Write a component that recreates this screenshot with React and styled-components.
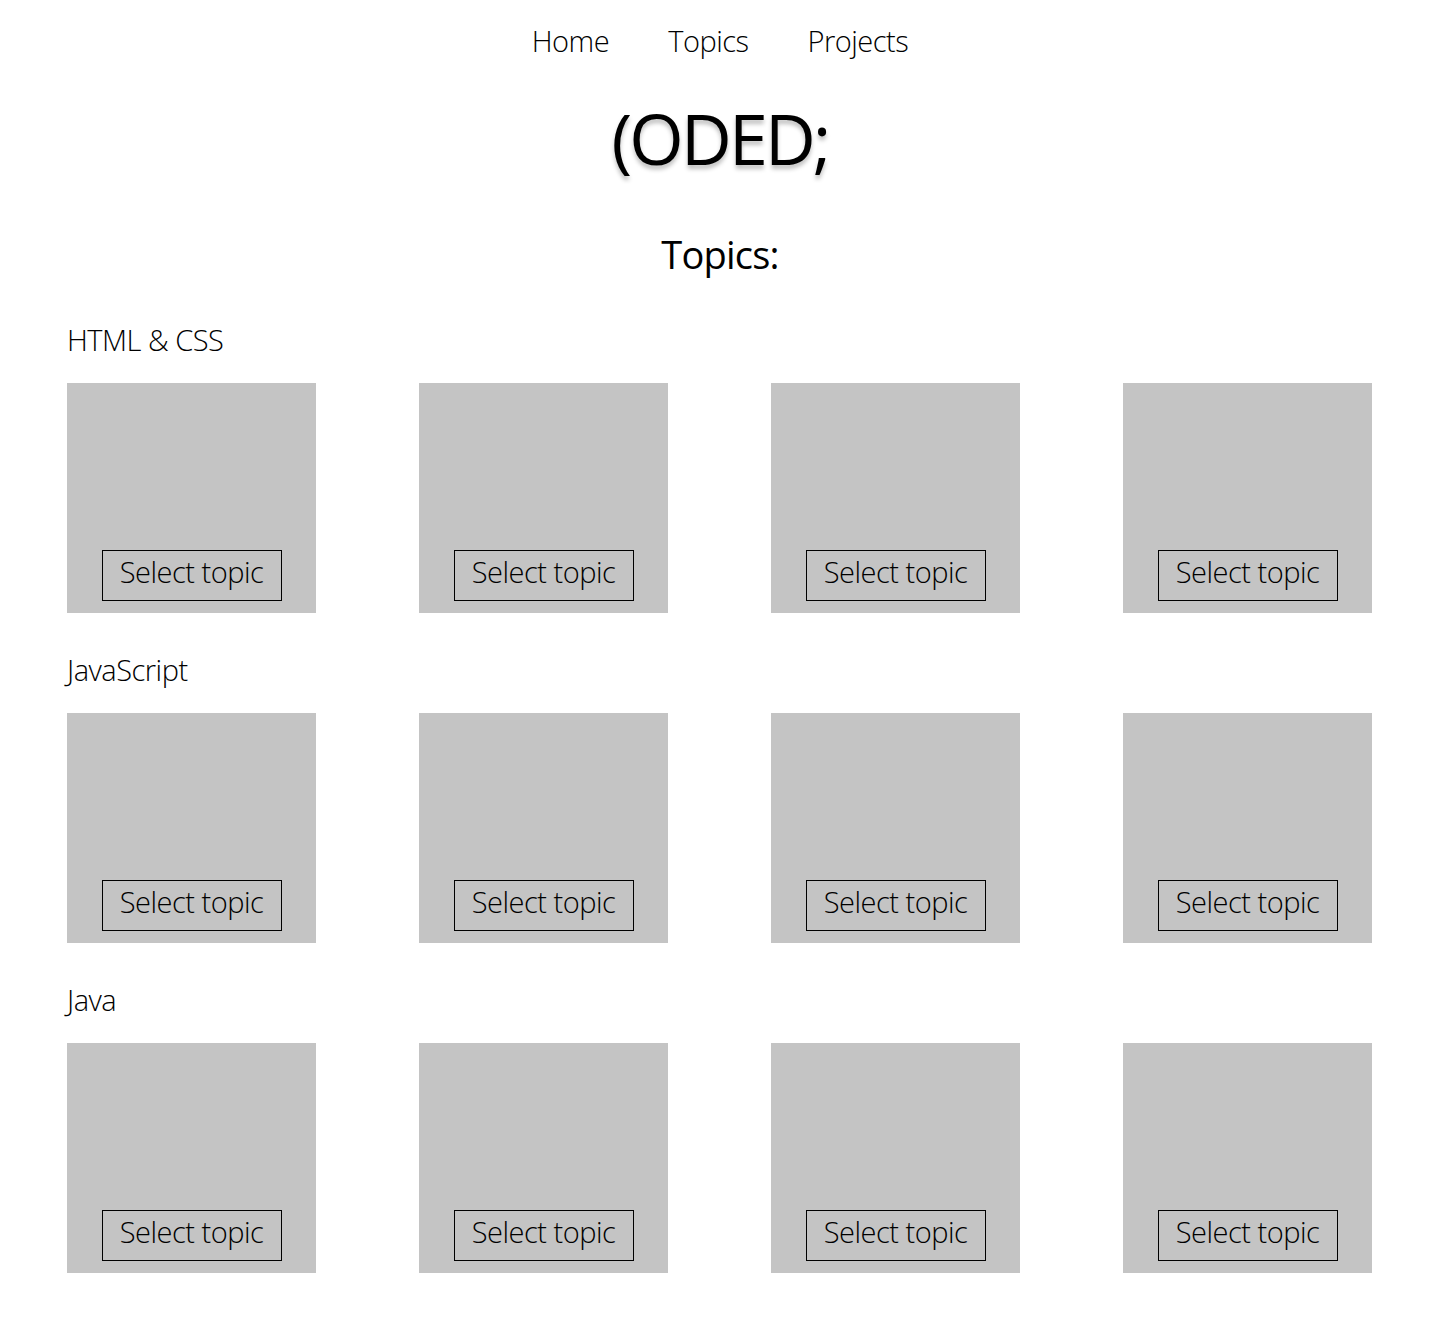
import styled, { createGlobalStyle } from 'styled-components'

const GlobalStyle = createGlobalStyle`
  body {
    margin: 0;
    background: #ffffff;
    font-family: 'Open Sans', 'Liberation Sans', sans-serif;
    color: #000000;
  }
`

const Page = styled.div`
  padding-bottom: 53px;
`
const Nav = styled.nav`
  display: flex;
  justify-content: center;
  gap: 59px;
  padding-top: 26px;
`
const NavLink = styled.a`
  font-size: 29px;
  font-weight: 300;
  letter-spacing: -0.5px;
  line-height: 30px;
  color: #000;
  text-decoration: none;
  cursor: pointer;
`
const Logo = styled.h1`
  margin: 47px 0 0;
  text-align: center;
  font-size: 70px;
  font-weight: 400;
  letter-spacing: -2.8px;
  line-height: 1;
  text-shadow: 0 4px 4px rgba(0, 0, 0, 0.25);
`
const PageTitle = styled.h2`
  margin: 62px 0 0;
  text-align: center;
  font-size: 38px;
  font-weight: 400;
  letter-spacing: -0.8px;
  line-height: 1;
`
const Sections = styled.div`
  display: flex;
  flex-direction: column;
  gap: 42px;
  padding: 0 67px;
  margin-top: 52px;
`
const Section = styled.section`
  display: flex;
  flex-direction: column;
  gap: 28px;
`
const SectionTitle = styled.h3`
  margin: 0;
  font-size: 29px;
  font-weight: 300;
  letter-spacing: -0.5px;
  line-height: 30px;
`
const CardRow = styled.div`
  display: grid;
  grid-template-columns: repeat(4, 249px);
  gap: 103px;
`
const Card = styled.div`
  height: 230px;
  background: #c4c4c4;
  display: flex;
  align-items: flex-end;
  justify-content: center;
  padding-bottom: 12px;
  box-sizing: border-box;
`
const SelectBtn = styled.button`
  width: 180px;
  height: 51px;
  box-sizing: border-box;
  border: 1px solid #000;
  background: transparent;
  padding: 0 0 8px;
  font-family: inherit;
  font-size: 29px;
  font-weight: 300;
  letter-spacing: -0.5px;
  line-height: 1;
  color: #000;
  cursor: pointer;
`

const topics = ['HTML & CSS', 'JavaScript', 'Java']

export default function App() {
  return (
    <>
      <GlobalStyle />
      <Page>
        <Nav>
          <NavLink>Home</NavLink>
          <NavLink>Topics</NavLink>
          <NavLink>Projects</NavLink>
        </Nav>
        <Logo>(ODED;</Logo>
        <PageTitle>Topics:</PageTitle>
        <Sections>
          {topics.map((topic) => (
            <Section key={topic}>
              <SectionTitle>{topic}</SectionTitle>
              <CardRow>
                {[0, 1, 2, 3].map((i) => (
                  <Card key={i}>
                    <SelectBtn>Select topic</SelectBtn>
                  </Card>
                ))}
              </CardRow>
            </Section>
          ))}
        </Sections>
      </Page>
    </>
  )
}
